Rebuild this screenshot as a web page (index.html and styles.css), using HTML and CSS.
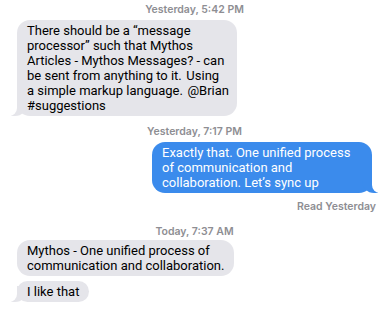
FILE: index.html
```html
<html>
<head>
<title>Messages</title>
<link rel="stylesheet" href="styles.css">
</head>
<body>
<div class="thread">
  <div class="stamp">Yesterday, 5:42 PM</div>
  <div class="row them">
    <div class="bubble gray tail wide">There should be a &ldquo;message<br>processor&rdquo; such that Mythos<br>Articles - Mythos Messages? - can<br>be sent from anything to it.&#8202; Using<br>a simple markup language.&#8202; @Brian<br>#suggestions</div>
  </div>

  <div class="stamp">Yesterday, 7:17 PM</div>
  <div class="row me">
    <div class="bubble blue tail wide">Exactly that. One unified process<br>of communication and<br>collaboration. Let&rsquo;s sync up</div>
  </div>
  <div class="read">Read Yesterday</div>

  <div class="stamp tight">Today, 7:37 AM</div>
  <div class="row them">
    <div class="bubble gray">Mythos - One unified process of<br>communication and collaboration.</div>
  </div>
  <div class="row them near">
    <div class="bubble gray tail">I like that</div>
  </div>
</div>
</body>
</html>
```

FILE: styles.css
```css
body { margin:0; background:#fff; font-family:Roboto, "Noto Sans", sans-serif; color:#000; }
.thread { display:flex; flex-direction:column; padding:4px 17px 0 17px; }
.stamp { text-align:center; font-family:Inter, sans-serif; font-size:10.5px; font-weight:600; color:#8e8e93; line-height:12px; margin:0 0 4px 0; }
.stamp.tight { margin-bottom:2px; }
.row { display:flex; margin-bottom:10px; }
.row.them { justify-content:flex-start; }
.row.me { justify-content:flex-end; margin-bottom:8px; }
.row.near { margin-top:-5px; }
.bubble { position:relative; font-size:13px; line-height:15px; padding:3px 10px; border-radius:13px; white-space:nowrap; }
.bubble.wide { width:220px; box-sizing:border-box; }
.gray { background:#e5e5ea; }
.blue { background:#3b8bec; color:#fff; }
.gray.tail::before { content:""; position:absolute; bottom:0; left:-6px; width:16px; height:16px; background:#e5e5ea; border-bottom-right-radius:12px; }
.gray.tail::after { content:""; position:absolute; bottom:0; left:-10px; width:10px; height:16px; background:#fff; border-bottom-right-radius:8px; }
.blue.tail::before { content:""; position:absolute; bottom:0; right:-6px; width:16px; height:16px; background:#3b8bec; border-bottom-left-radius:12px; }
.blue.tail::after { content:""; position:absolute; bottom:0; right:-10px; width:10px; height:16px; background:#fff; border-bottom-left-radius:8px; }
.read { text-align:right; font-family:Inter, sans-serif; font-size:10.5px; font-weight:600; color:#8e8e93; line-height:12px; margin:0 -4px 13px 0; }
```
